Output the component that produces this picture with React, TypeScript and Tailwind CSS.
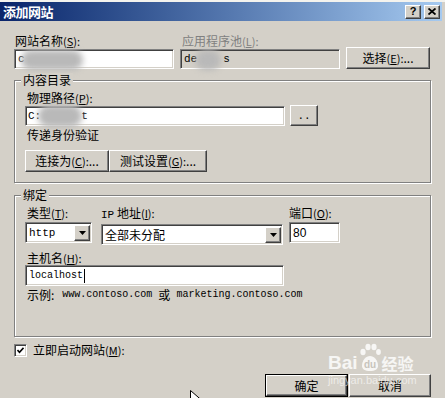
import type React from "react"

const cjk = { fontFamily: '"Noto Sans CJK SC", "Liberation Sans", sans-serif' }
const mono = { fontFamily: '"Liberation Mono", "Noto Sans CJK SC", monospace' }

// classic 3D frames
const sunken =
  "border border-t-[#808080] border-l-[#808080] border-b-white border-r-white shadow-[inset_1px_1px_0_#404040,inset_-1px_-1px_0_#d4d0c8]"
const raised =
  "border border-t-white border-l-white border-b-[#404040] border-r-[#404040] shadow-[inset_-1px_-1px_0_#808080]"
const etched =
  "border border-[#808080] shadow-[inset_1px_1px_0_#ffffff,1px_1px_0_#ffffff]"

function Mn({ k }: { k: string }) {
  return (
    <span className="text-[11px]">
      (<span className="underline">{k}</span>):
    </span>
  )
}

function Blur({ className }: { className: string }) {
  return <div className={"absolute rounded-full bg-[#b9b9b9] blur-[3px] " + className} />
}

function Select({ value, width, monoText }: { value: string; width: string; monoText?: boolean }) {
  return (
    <div className={`${sunken} ${width} h-[21px] bg-white flex items-center justify-between pl-[3px] pr-[1px]`}>
      <span className={monoText ? "text-[11px]" : "text-[12px]"} style={monoText ? mono : cjk}>
        {value}
      </span>
      <div className={`${raised} bg-[#d4d0c8] w-[16px] h-[16px] flex items-center justify-center`}>
        <svg width="7" height="4" viewBox="0 0 7 4">
          <path d="M0 0h7L3.5 4z" fill="#000" />
        </svg>
      </div>
    </div>
  )
}

export default function App() {
  return (
    <div
      className="relative w-[445px] h-[398px] overflow-hidden bg-[#d4d0c8] border-t-2 border-t-[#f4f3ee] text-black select-none"
      style={cjk}
    >
      {/* Title bar */}
      <div className="h-[19px] w-[442px] bg-gradient-to-r from-[#0a246a] to-[#a6caf0] flex items-center justify-between pl-[3px] pr-[2px]">
        <span className="text-white font-bold text-[13px] leading-none tracking-[-0.5px]">添加网站</span>
        <div className="flex gap-[3px]">
          <div className={`${raised} bg-[#d4d0c8] w-[16px] h-[14px] flex items-center justify-center`}>
            <span className="text-[11px] font-bold leading-none" style={{ fontFamily: '"Liberation Sans", sans-serif' }}>
              ?
            </span>
          </div>
          <div className={`${raised} bg-[#d4d0c8] w-[16px] h-[14px] flex items-center justify-center`}>
            <svg width="8" height="7" viewBox="0 0 8 7">
              <path d="M0.5 0.5l7 6M7.5 0.5l-7 6" stroke="#000" strokeWidth="1.8" />
            </svg>
          </div>
        </div>
      </div>

      <div className="px-[14px] flex flex-col text-[12px] leading-[14px]">
        {/* Site name / app pool */}
        <div className="mt-[13px] flex items-end">
          <div className="w-[160px] flex flex-col">
            <span className="pl-[1px]">
              网站名称<Mn k="S" />
            </span>
            <div className={`${sunken} relative mt-[1px] h-[20px] bg-white flex items-center pl-[3px]`}>
              <span className="text-[11px]" style={mono}>c</span>
              <Blur className="left-[6px] top-[0px] w-[62px] h-[20px]" />
            </div>
          </div>
          <div className="ml-[6px] w-[160px] flex flex-col">
            <span className="pl-[2px] text-[#808080]">
              应用程序池<Mn k="L" />
            </span>
            <div className={`${sunken} relative mt-[1px] h-[20px] bg-[#d4d0c8] flex items-center pl-[3px]`}>
              <span className="text-[11px]" style={mono}>de</span>
              <span className="text-[11px] ml-[26px]" style={mono}>s</span>
              <Blur className="left-[14px] top-[0px] w-[26px] h-[20px]" />
            </div>
          </div>
          <button className={`${raised} ml-[6px] w-[84px] h-[22px] bg-[#d4d0c8] text-[12px] flex items-center justify-center`}>
            选择<Mn k="E" />...
          </button>
        </div>

        {/* Content directory group */}
        <div className={`${etched} relative mt-[11px] h-[103px] w-[417px] px-[10px] pt-[10px] flex flex-col`}>
          <span className="absolute left-[6px] top-[-8px] px-[2px] bg-[#d4d0c8]">内容目录</span>
          <span className="pl-[2px]">
            物理路径<Mn k="P" />
          </span>
          <div className="flex items-end">
            <div className={`${sunken} relative w-[260px] h-[20px] bg-white flex items-center pl-[2px]`}>
              <span className="text-[11px]" style={mono}>C:</span>
              <span className="text-[11px] ml-[40px]" style={mono}>t</span>
              <Blur className="left-[12px] top-[-2px] w-[44px] h-[22px]" />
            </div>
            <button className={`${raised} ml-[5px] w-[28px] h-[21px] bg-[#d4d0c8] text-[11px] flex items-center justify-center`} style={mono}>
              ..
            </button>
          </div>
          <span className="mt-[2px] pl-[2px]">传递身份验证</span>
          <div className="mt-[8px] flex">
            <button className={`${raised} w-[84px] h-[22px] bg-[#d4d0c8] flex items-center justify-center`}>
              连接为<Mn k="C" />...
            </button>
            <button className={`${raised} w-[98px] h-[22px] bg-[#d4d0c8] flex items-center justify-center`}>
              测试设置<Mn k="G" />...
            </button>
          </div>
        </div>

        {/* Binding group */}
        <div className={`${etched} relative mt-[12px] h-[142px] w-[417px] px-[10px] pt-[10px] flex flex-col`}>
          <span className="absolute left-[6px] top-[-8px] px-[2px] bg-[#d4d0c8]">绑定</span>
          <div className="flex">
            <div className="w-[67px] flex flex-col">
              <span className="pl-[2px]">
                类型<Mn k="T" />
              </span>
              <div className="mt-[2px]">
                <Select value="http" width="w-[67px]" monoText />
              </div>
            </div>
            <div className="ml-[9px] w-[182px] flex flex-col">
              <span>
                <span className="text-[11px]" style={mono}>IP</span> 地址<Mn k="I" />
              </span>
              <div className="mt-[2px]">
                <Select value="全部未分配" width="w-[182px]" />
              </div>
            </div>
            <div className="ml-[6px] w-[51px] flex flex-col">
              <span>
                端口<Mn k="O" />
              </span>
              <div className={`${sunken} mt-[2px] h-[21px] bg-white flex items-center pl-[3px]`}>
                <span className="text-[12px]" style={{ fontFamily: '"Liberation Sans", sans-serif' }}>80</span>
              </div>
            </div>
          </div>
          <span className="mt-[6px] pl-[2px]">
            主机名<Mn k="H" />
          </span>
          <div className={`${sunken} w-[259px] h-[21px] bg-white flex items-center pl-[3px]`}>
            <span className="text-[10px]" style={mono}>localhost</span>
            <span className="ml-[1px] w-[1px] h-[14px] bg-black" />
          </div>
          <span className="mt-[2px] pl-[2px] flex items-center">
            示例:
            <span className="ml-[8px] text-[10px]" style={mono}>
              www.contoso.com
            </span>
            <span className="mx-[6px]">或</span>
            <span className="text-[10px]" style={mono}>
              marketing.contoso.com
            </span>
          </span>
        </div>

        {/* Start site checkbox */}
        <div className="mt-[6px] flex items-center">
          <div className={`${sunken} w-[13px] h-[13px] bg-white flex items-center justify-center`}>
            <svg width="7" height="7" viewBox="0 0 7 7">
              <path d="M0.5 3l2 2.2L6.5 0.8" stroke="#000" strokeWidth="1.6" fill="none" />
            </svg>
          </div>
          <span className="ml-[6px]">
            立即启动网站<Mn k="M" />
          </span>
        </div>

        {/* Dialog buttons */}
        <div className="mt-[17px] flex justify-end">
          <div className="border border-black">
            <button className={`${raised} w-[81px] h-[21px] bg-[#d4d0c8] flex items-center justify-center`}>确定</button>
          </div>
          <button className={`${raised} ml-[1px] w-[82px] h-[23px] bg-[#d4d0c8] flex items-center justify-center`}>
            取消
          </button>
        </div>
      </div>

      {/* Baidu watermark */}
      <div className="absolute left-[328px] top-[340px] flex flex-col items-start text-white/80 pointer-events-none">
        <div className="flex items-end">
          <span className="text-[19px] font-bold leading-none" style={{ fontFamily: '"Liberation Sans", sans-serif' }}>
            Bai
          </span>
          <svg width="22" height="30" viewBox="0 0 22 30" className="mx-[1px]">
            <g fill="#ffffff" fillOpacity="0.8">
              <ellipse cx="4" cy="10" rx="2.6" ry="3.2" />
              <ellipse cx="9" cy="5" rx="2.6" ry="3.2" />
              <ellipse cx="15" cy="5" rx="2.6" ry="3.2" />
              <ellipse cx="19.5" cy="10" rx="2.4" ry="3" />
              <path d="M3 24c0-6 4-10 8-10s8 4 8 10c0 3-3 5-8 5s-8-2-8-5z" />
            </g>
            <text x="11" y="26" textAnchor="middle" fontSize="10" fontWeight="bold" fill="#c8c4bc" fontFamily="Liberation Sans">
              du
            </text>
          </svg>
          <span className="text-[16px] font-bold leading-none mb-[1px]">经验</span>
        </div>
        <span className="text-[11px] leading-none mt-[3px] text-white/60" style={{ fontFamily: '"Liberation Sans", sans-serif' }}>
          jingyan.baidu.com
        </span>
      </div>

      {/* Mouse pointer */}
      <svg className="absolute left-[190px] top-[388px]" width="12" height="18" viewBox="0 0 12 18">
        <path d="M0.5 0.5v15l4-4 3 6 2-1-3-6h5.5z" fill="#fff" stroke="#000" />
      </svg>
    </div>
  )
}

const _unused: React.FC | null = null
void _unused
